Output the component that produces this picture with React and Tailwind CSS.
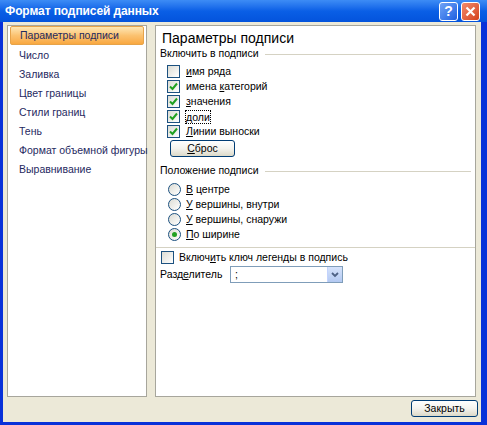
import React from "react";

const font = { fontFamily: '"Liberation Sans", Arial, sans-serif' };

const navItems = [
  "Параметры подписи",
  "Число",
  "Заливка",
  "Цвет границы",
  "Стили границ",
  "Тень",
  "Формат объемной фигуры",
  "Выравнивание",
];

// чекбокс в стиле XP
const CheckBox = ({ checked }) => (
  <span className="w-[13px] h-[13px] border border-[#1c5180] bg-gradient-to-br from-[#dcdcd4] to-white flex items-center justify-center shrink-0">
    {checked && (
      <svg width="9" height="9" viewBox="0 0 9 9">
        <path d="M1 4.5 L3.5 7 L8 1.5" stroke="#21a121" strokeWidth="2" fill="none" />
      </svg>
    )}
  </span>
);

const Radio = ({ checked }) => (
  <span className="w-[13px] h-[13px] rounded-full border border-[#1c5180] bg-gradient-to-br from-[#dcdcd4] to-white flex items-center justify-center shrink-0">
    {checked && <span className="w-[5px] h-[5px] rounded-full bg-[#21a121]" />}
  </span>
);

const SectionTitle = ({ children }) => (
  <div className="flex items-center h-[14px] text-[10.5px] text-black">
    <span>{children}</span>
    <span className="flex-1 h-px bg-[#d5d2c3] ml-[6px] mr-[4px]" />
  </div>
);

const XpButton = ({ children, className }) => (
  <button
    className={
      "h-[17px] rounded-[3px] border border-[#003c74] bg-gradient-to-b from-white via-[#f4f3ee] to-[#dcd9c8] text-[10.5px] text-black flex items-center justify-center " +
      className
    }
  >
    {children}
  </button>
);

export default function App() {
  const checks = [
    { label: "имя ряда", u: 0, checked: false },
    { label: "имена категорий", u: 6, checked: true },
    { label: "значения", u: 0, checked: true },
    { label: "доли", u: 0, checked: true, focus: true },
    { label: "Линии выноски", u: 0, checked: true },
  ];
  const radios = [
    { label: "В центре", checked: false },
    { label: "У вершины, внутри", checked: false },
    { label: "У вершины, снаружи", checked: false },
    { label: "По ширине", checked: true },
  ];

  const underline = (text, i) => (
    <>
      {text.slice(0, i)}
      <span className="underline">{text[i]}</span>
      {text.slice(i + 1)}
    </>
  );

  return (
    <div
      className="w-[487px] h-[425px] flex flex-col bg-[#0831d9] overflow-hidden"
      style={font}
    >
      {/* заголовок окна */}
      <div className="h-[22px] shrink-0 flex items-center bg-gradient-to-b from-[#3d8cf5] via-[#0a5fe6] to-[#0453dc] pl-[5px] pr-[7px]">
        <span className="text-white font-bold text-[12px] tracking-[-0.1px] flex-1">
          Формат подписей данных
        </span>
        <div className="flex gap-[3px]">
          <span className="w-[19px] h-[19px] rounded-[3px] border border-white bg-gradient-to-br from-[#6fa3f6] to-[#1d5ee0] flex items-center justify-center text-white font-bold text-[14px]">
            ?
          </span>
          <span className="w-[19px] h-[19px] rounded-[3px] border border-white bg-gradient-to-br from-[#f28a6c] to-[#d43f16] flex items-center justify-center">
            <svg width="11" height="11" viewBox="0 0 11 11">
              <path d="M1.5 1.5 L9.5 9.5 M9.5 1.5 L1.5 9.5" stroke="white" strokeWidth="2.2" />
            </svg>
          </span>
        </div>
      </div>

      {/* тело окна */}
      <div className="flex-1 flex flex-col bg-[#ece9d8] ml-[3px] mr-[6px] mb-[3px]">
        <div className="flex gap-[8px] pl-[4px] pt-[3px]">
          {/* левая панель */}
          <div className="w-[140px] h-[372px] bg-white border border-[#a7a69c] px-[2px] flex flex-col">
            {navItems.map((item, i) => (
              <div
                key={item}
                className={
                  "h-[19px] shrink-0 flex items-center pl-[9px] text-[10.5px] text-[#1f2a5f] whitespace-nowrap " +
                  (i === 0
                    ? "h-[18px] mb-[1px] border border-[#e6a34a] rounded-[2px] bg-gradient-to-b from-[#fde7b4] via-[#fbc270] to-[#f9a83f]"
                    : "")
                }
              >
                {item}
              </div>
            ))}
          </div>

          {/* правая панель */}
          <div className="w-[321px] h-[372px] bg-white border border-[#a7a69c] flex flex-col pl-[4px]">
            <div className="mt-[4px] pl-[2px] h-[16px] flex items-center text-[14px] text-black">
              Параметры подписи
            </div>
            <div className="mt-[1px]">
              <SectionTitle>Включить в подписи</SectionTitle>
            </div>
            <div className="mt-[3px] flex flex-col pl-[7px]">
              {checks.map((c) => (
                <div key={c.label} className="h-[15px] flex items-center gap-[6px] text-[10.5px] text-black">
                  <CheckBox checked={c.checked} />
                  <span className={c.focus ? "outline outline-1 outline-dotted outline-black leading-[12px]" : ""}>
                    {underline(c.label, c.u)}
                  </span>
                </div>
              ))}
            </div>
            <div className="mt-[1px] pl-[10px] flex">
              <XpButton className="w-[65px]">
                <span className="underline">С</span>брос
              </XpButton>
            </div>
            <div className="mt-[7px]">
              <SectionTitle>Положение подписи</SectionTitle>
            </div>
            <div className="mt-[4px] flex flex-col pl-[8px]">
              {radios.map((r) => (
                <div key={r.label} className="h-[15px] flex items-center gap-[5px] text-[10.5px] text-black">
                  <Radio checked={r.checked} />
                  <span>{underline(r.label, 0)}</span>
                </div>
              ))}
            </div>
            <div className="mt-[5px] h-px bg-[#d5d2c3] -ml-[4px]" />
            <div className="mt-[2px] h-[15px] flex items-center gap-[5px] pl-[1px] text-[10.5px] text-black">
              <CheckBox checked={false} />
              <span>{underline("Включить ключ легенды в подпись", 5)}</span>
            </div>
            <div className="mt-[1px] flex items-center text-[10.5px] text-black">
              <span className="w-[70px]">{underline("Разделитель", 4)}</span>
              <div className="w-[113px] h-[17px] border border-[#7f9db9] flex items-center">
                <span className="flex-1 pl-[4px]">;</span>
                <span className="w-[15px] h-[15px] bg-gradient-to-b from-[#d6e3fb] to-[#b3c9f2] border-l border-[#c3d3fd] flex items-center justify-center">
                  <svg width="8" height="6" viewBox="0 0 8 6">
                    <path d="M1 1 L4 4 L7 1" stroke="#4d6185" strokeWidth="1.8" fill="none" />
                  </svg>
                </span>
              </div>
            </div>
          </div>
        </div>

        {/* нижняя кнопка */}
        <div className="flex justify-end pr-[3px] mt-[3px]">
          <XpButton className="w-[67px]">Закрыть</XpButton>
        </div>
      </div>
    </div>
  );
}
